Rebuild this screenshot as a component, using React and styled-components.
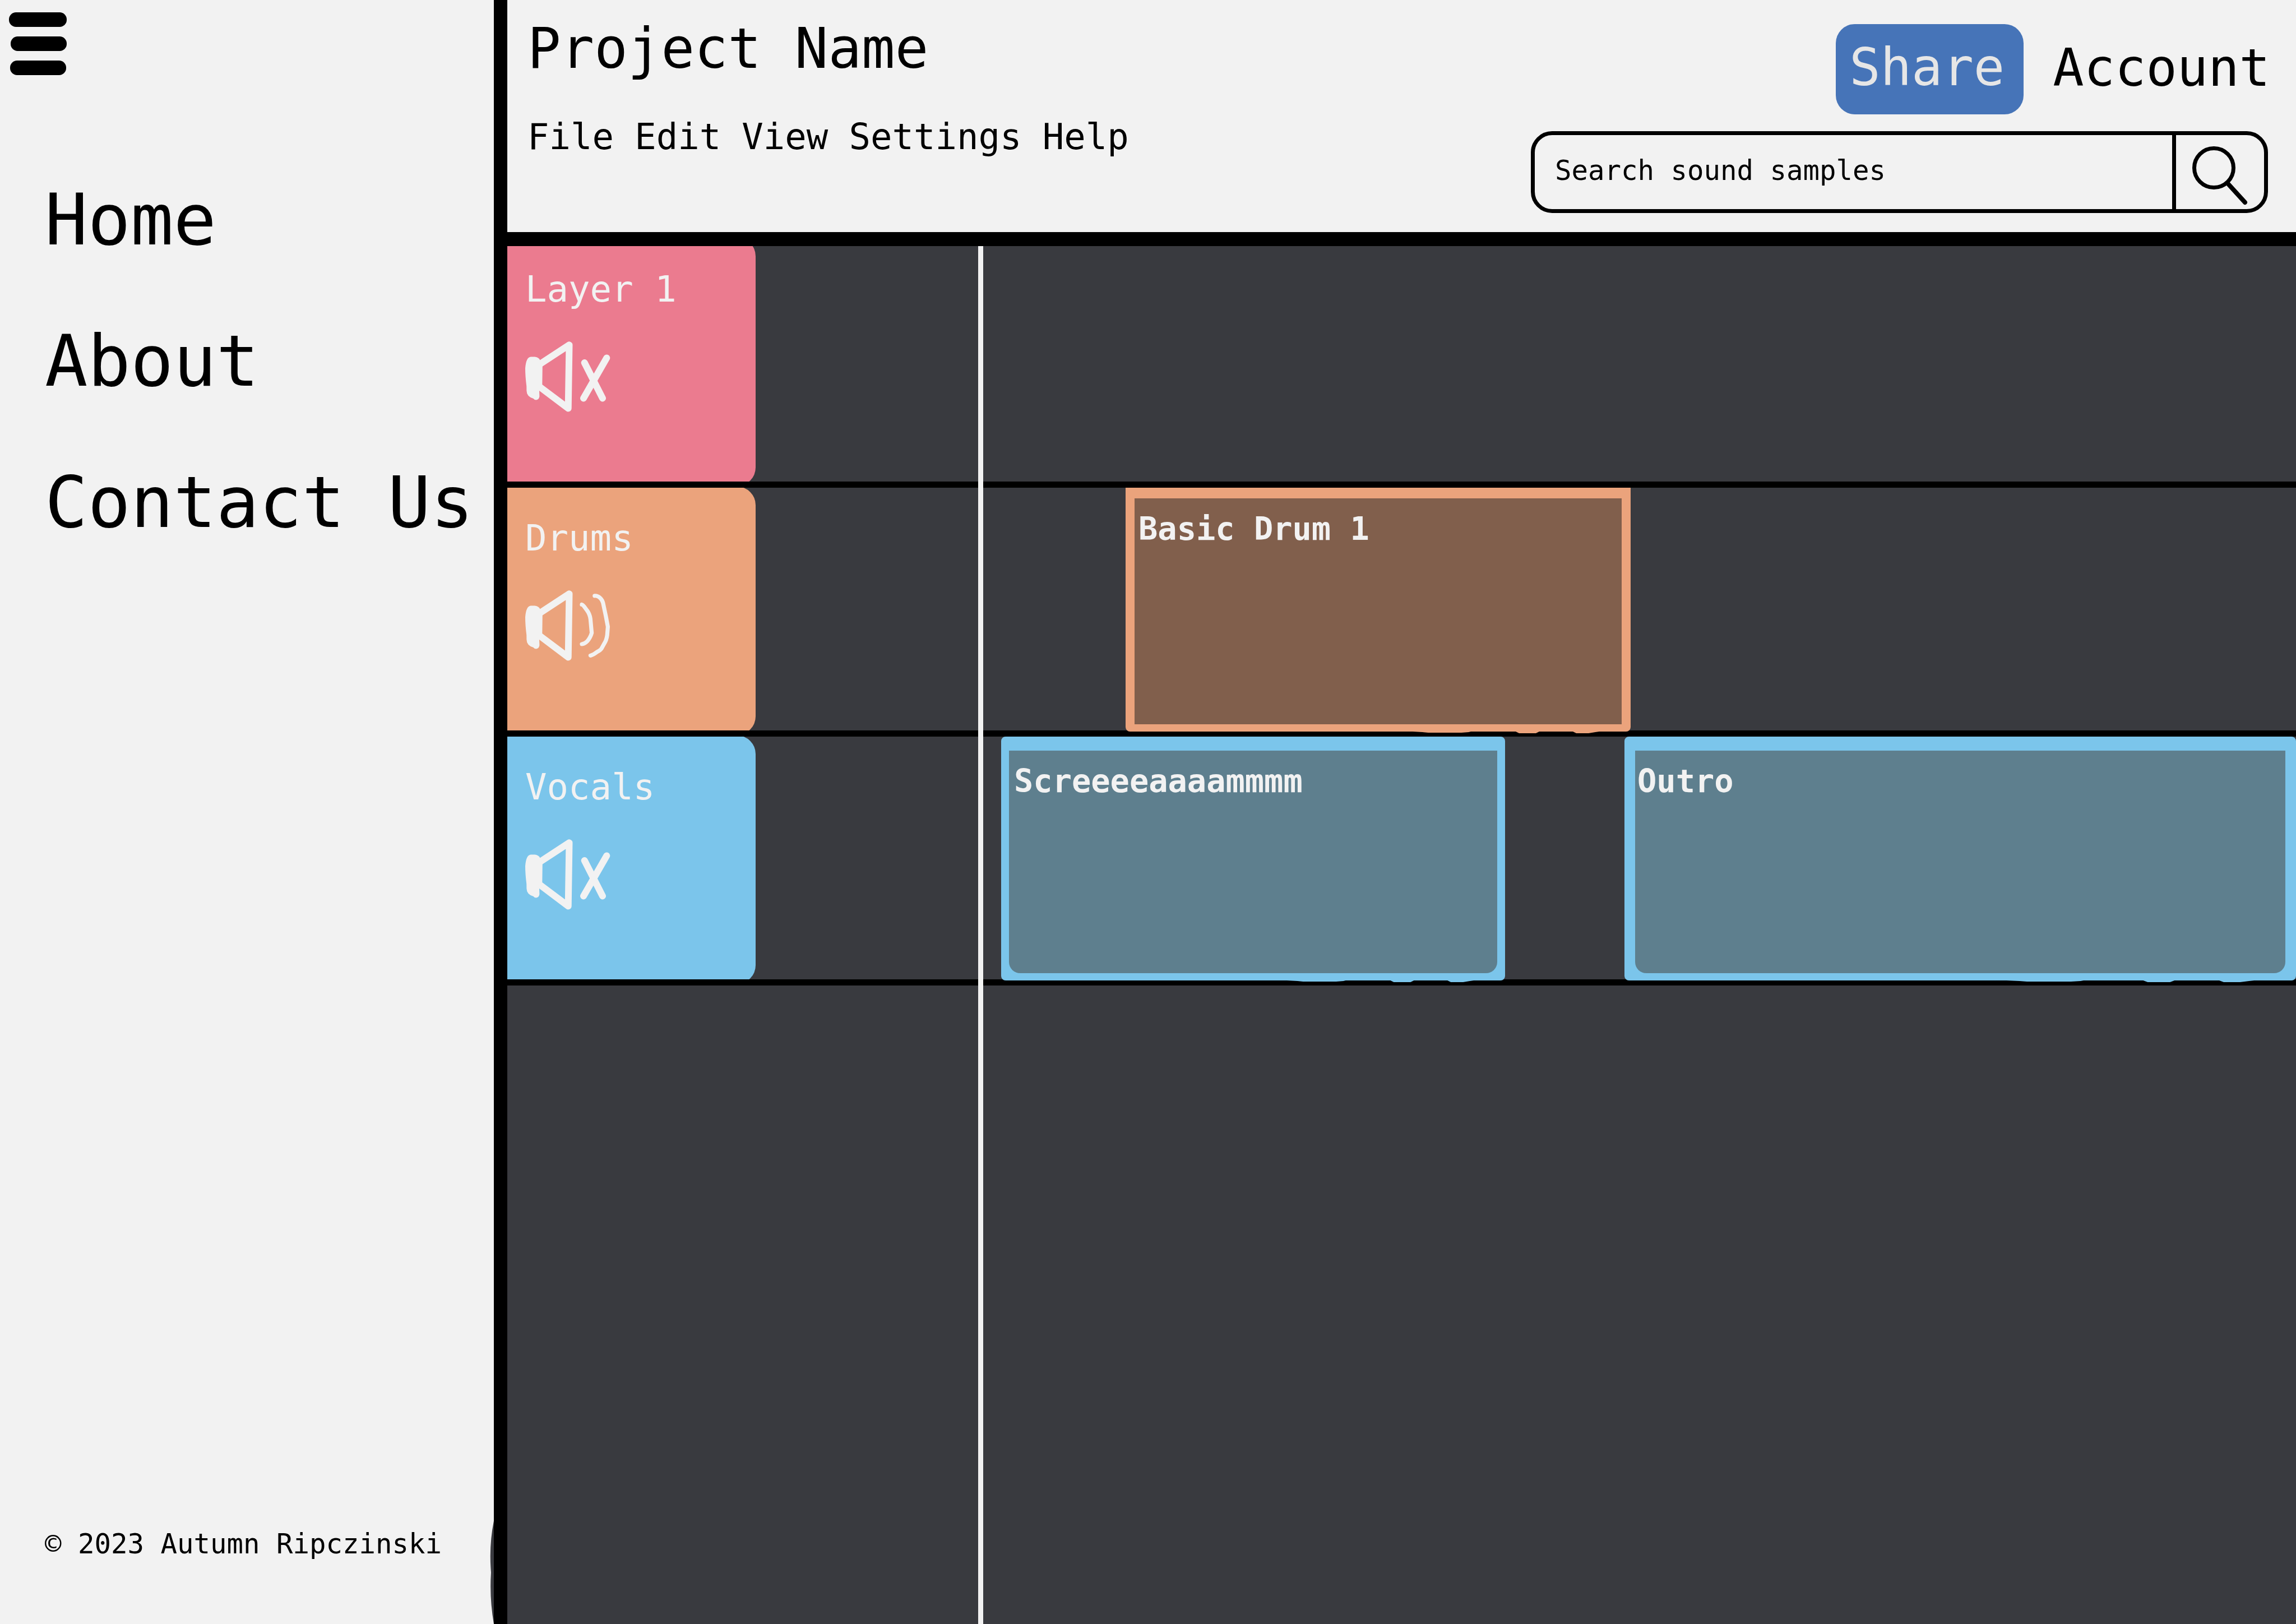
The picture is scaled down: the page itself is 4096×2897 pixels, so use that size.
import React from "react";
import styled, { createGlobalStyle } from "styled-components";

const ink = "#000000";
const paper = "#f2f2f2";
const slate = "#393a3f";

const GlobalStyle = createGlobalStyle`
  *, *::before, *::after { box-sizing: border-box; }
  body { margin: 0; background: ${slate}; }
  body, button, input { font-family: "DejaVu Sans Mono", "Liberation Mono", monospace; }
  button { border: 0; padding: 0; background: none; color: inherit; cursor: pointer; }
  a { color: inherit; text-decoration: none; }
  svg { display: block; }
`;

const Page = styled.div`
  display: grid;
  grid-template-columns: 905px minmax(0, 1fr);
  min-height: 100vh;
  color: ${ink};
`;

const Sidebar = styled.aside`
  position: relative;
  display: flex;
  flex-direction: column;
  background: ${paper};
  border-right: 24px solid ${ink};
`;

const MenuToggle = styled.button`
  align-self: flex-start;
  margin: 22px 0 0 16px;
`;

const SideNav = styled.nav`
  display: flex;
  flex-direction: column;
  align-items: flex-start;
  gap: 100px;
  padding: 182px 0 0 80px;
`;

const SideLink = styled.a`
  font-size: 127px;
  line-height: 152px;
  white-space: nowrap;
`;

const Copyright = styled.footer`
  margin-top: auto;
  padding: 0 0 112px 80px;
  font-size: 49px;
  line-height: 60px;
  white-space: nowrap;
`;

const BrushEdge = styled.svg`
  position: absolute;
  right: 0;
  bottom: 0;
`;

const Workspace = styled.main`
  position: relative;
  display: flex;
  flex-direction: column;
  background: ${slate};
`;

const Header = styled.header`
  display: flex;
  justify-content: space-between;
  min-height: 439px;
  padding: 0 50px 0 36px;
  background: ${paper};
  border-bottom: 25px solid ${ink};
`;

const ProjectArea = styled.div`
  display: flex;
  flex-direction: column;
  gap: 57px;
  padding-top: 27px;
`;

const ProjectName = styled.h1`
  margin: 0;
  font-size: 99px;
  font-weight: 400;
  line-height: 120px;
`;

const MenuBar = styled.nav`
  display: flex;
  gap: 37px;
`;

const MenuItem = styled.button`
  font-size: 64px;
  line-height: 80px;
`;

const ToolArea = styled.div`
  display: flex;
  flex-direction: column;
  align-items: flex-end;
  gap: 30px;
  width: 1315px;
  padding-top: 43px;
`;

const AccountRow = styled.div`
  display: flex;
  align-items: center;
  gap: 52px;
  margin-right: -4px;
`;

const ShareButton = styled.button`
  width: 335px;
  padding: 0 10px 6px 0;
  border-radius: 34px;
  background: #4674b8;
  color: #e6e6e6;
  font-size: 92px;
  line-height: 155px;
`;

const AccountLink = styled.a`
  padding-bottom: 4px;
  font-size: 92px;
  line-height: 155px;
`;

const SearchForm = styled.form`
  display: flex;
  width: 100%;
  height: 146px;
  border: 7px solid ${ink};
  border-radius: 38px;
`;

const SearchInput = styled.input`
  flex: 1;
  min-width: 0;
  padding: 0 36px 6px;
  border: 0;
  outline: 0;
  background: transparent;
  color: ${ink};
  font-size: 49px;

  &::placeholder { color: ${ink}; opacity: 1; }
`;

const SearchButton = styled.button`
  display: flex;
  justify-content: center;
  align-items: center;
  width: 164px;
  padding-top: 14px;
  border-left: 7px solid ${ink};
`;

const Track = styled.section`
  display: grid;
  grid-template-columns: 443px minmax(0, 1fr);
  height: ${(p) => p.$height}px;
  border-bottom: 11px solid ${ink};
`;

/* The card is taller than its row, so its round corners are cut by the row lines. */
const TrackCard = styled.div`
  display: flex;
  flex-direction: column;
  justify-content: flex-end;
  align-items: flex-start;
  gap: 53px;
  margin: -${(p) => p.$cut}px 0 -8px;
  padding: 0 0 132px 32px;
  border-radius: 0 33px 33px 0;
  background: ${(p) => p.$color};
  color: ${paper};
  clip-path: inset(${(p) => p.$cut}px 0 8px 0);
`;

const TrackName = styled.h2`
  margin: 0;
  font-size: 64px;
  font-weight: 400;
  line-height: 80px;
`;

const Lane = styled.div`
  display: grid;
  grid-template-columns: ${(p) => p.$columns};
`;

const Clip = styled.article`
  position: relative;
  grid-column: ${(p) => p.$column};
  margin-bottom: -2px;
  border: solid ${(p) => p.$color};
  border-width: ${(p) => p.$top}px ${(p) => p.$side}px 13px;
  border-radius: ${(p) => (p.$soft ? "8px" : "0 0 8px 8px")};
  background: ${(p) => p.$color};
`;

const ClipBody = styled.div`
  height: 100%;
  padding: 19px 0 0 ${(p) => 23 - p.$side}px;
  border-radius: ${(p) => (p.$soft ? "0 0 20px 20px" : "0")};
  background: ${(p) => p.$fill};
`;

const ClipName = styled.h3`
  margin: 0;
  color: ${paper};
  font-size: 57px;
  font-weight: 700;
  line-height: 70px;
`;

const ClipDrips = styled.svg`
  position: absolute;
  top: calc(100% + 12px);
  left: -${(p) => p.$side}px;
  width: calc(100% + ${(p) => 2 * p.$side}px);
  height: 5px;
`;

const Playhead = styled.div`
  position: absolute;
  top: 439px;
  bottom: 0;
  left: 840px;
  width: 9px;
  background: ${paper};
`;

const tracks = [
  { name: "Layer 1", color: "#eb7b8f", height: 431, cut: 15, muted: true, columns: "1fr", clips: [] },
  {
    name: "Drums",
    color: "#eba37c",
    height: 444,
    cut: 2,
    muted: false,
    columns: "660fr 901fr 1187fr",
    clips: [{ name: "Basic Drum 1", column: 2, fill: "#815f4c", top: 19, side: 16, soft: false }],
  },
  {
    name: "Vocals",
    color: "#7bc5eb",
    height: 444,
    cut: 2,
    muted: true,
    columns: "438fr 899fr 213fr 1198fr",
    clips: [
      { name: "Screeeeaaaammmm", column: 2, fill: "#5e7f8e", top: 25, side: 14, soft: true },
      { name: "Outro", column: 4, fill: "#5e7f8e", top: 25, side: 19, soft: true },
    ],
  },
];

function MenuIcon() {
  return (
    <svg width="103" height="112" viewBox="0 0 103 112" fill={ink} aria-hidden="true">
      <rect x="0" y="0" width="103" height="26" rx="12.5" />
      <rect x="3" y="43" width="100" height="26" rx="12.5" />
      <rect x="2" y="86" width="100" height="26" rx="12.5" />
    </svg>
  );
}

function SearchIcon() {
  return (
    <svg width="99" height="106" viewBox="0 0 99 106" fill="none" stroke={ink} aria-hidden="true">
      <circle cx="38.5" cy="38.5" r="35" strokeWidth="7" />
      <path d="M63 66 L94 100" strokeWidth="8" strokeLinecap="round" />
    </svg>
  );
}

function SpeakerIcon({ muted }) {
  return (
    <svg width="152" height="126" viewBox="0 0 152 126" fill="none" stroke="currentColor" strokeLinecap="round" strokeLinejoin="round" aria-hidden="true">
      <path
        d="M30.8 43 L30.3 79 L25 88 L25.4 98 Q25 103.5 19.5 104.5 Q16.5 104.5 14.5 102 Q2.6 98.5 2.4 88 L2.3 80 Q0 62 0 48 Q1.5 28 10 27.5 H17 Q25 28.5 26.5 34 Z"
        fill="currentColor"
        stroke="none"
      />
      <path d="M27 40 L78.5 6.3 L76.7 119.4 L27 82" strokeWidth="12" />
      {muted ? (
        <path d="M105.7 38 L138 101.5 M145.3 29.5 L104 101.5" strokeWidth="12" />
      ) : (
        <g strokeWidth="7.2">
          <path d="M101 25.5 C104 26 107 32 110 35.5 Q115 42 116.3 51 L118.6 76 Q116 85 110.5 91 Q106 95.5 101 96" />
          <path d="M123.8 9.8 C131 9 137 16 138.7 22 L143.8 46 L147.4 65 L146.2 80 Q145 89 141 95 L136 104 Q134 107 128 110 Q122 115 116.4 116.4" />
        </g>
      )}
    </svg>
  );
}

export default function App() {
  return (
    <>
      <GlobalStyle />
      <Page>
        <Sidebar>
          <MenuToggle type="button" aria-label="Toggle menu">
            <MenuIcon />
          </MenuToggle>
          <SideNav aria-label="Site">
            <SideLink href="#home">Home</SideLink>
            <SideLink href="#about">About</SideLink>
            <SideLink href="#contact">Contact Us</SideLink>
          </SideNav>
          <Copyright>© 2023 Autumn Ripczinski</Copyright>
          <BrushEdge width="8" height="184" viewBox="0 0 8 184" fill={slate} aria-hidden="true">
            <path d="M8 0 Q-1 45 3 92 Q0 138 8 184 Z" />
          </BrushEdge>
        </Sidebar>

        <Workspace>
          <Header>
            <ProjectArea>
              <ProjectName>Project Name</ProjectName>
              <MenuBar aria-label="Project">
                {["File", "Edit", "View", "Settings", "Help"].map((item) => (
                  <MenuItem key={item} type="button">{item}</MenuItem>
                ))}
              </MenuBar>
            </ProjectArea>
            <ToolArea>
              <AccountRow>
                <ShareButton type="button">Share</ShareButton>
                <AccountLink href="#account">Account</AccountLink>
              </AccountRow>
              <SearchForm role="search" onSubmit={(e) => e.preventDefault()}>
                <SearchInput type="text" aria-label="Search sound samples" placeholder="Search sound samples" />
                <SearchButton type="submit" aria-label="Search">
                  <SearchIcon />
                </SearchButton>
              </SearchForm>
            </ToolArea>
          </Header>

          {tracks.map((track) => (
            <Track key={track.name} $height={track.height}>
              <TrackCard $color={track.color} $cut={track.cut}>
                <TrackName>{track.name}</TrackName>
                <button type="button" aria-label={track.muted ? "Unmute" : "Mute"}>
                  <SpeakerIcon muted={track.muted} />
                </button>
              </TrackCard>
              <Lane $columns={track.columns}>
                {track.clips.map((clip) => (
                  <Clip key={clip.name} $column={clip.column} $color={track.color} $top={clip.top} $side={clip.side} $soft={clip.soft}>
                    <ClipBody $fill={clip.fill} $side={clip.side} $soft={clip.soft}>
                      <ClipName>{clip.name}</ClipName>
                    </ClipBody>
                    <ClipDrips $side={clip.side} viewBox="0 0 901 5" preserveAspectRatio="none" fill={track.color} aria-hidden="true">
                      <path d="M494 0 H620 L612 2 L599 3 H540 L530 2 Z M694 0 H740 L732 4 H702 Z M796 0 H852 L838 2 L826 4 H804 Z" />
                    </ClipDrips>
                  </Clip>
                ))}
              </Lane>
            </Track>
          ))}
          <Playhead />
        </Workspace>
      </Page>
    </>
  );
}
